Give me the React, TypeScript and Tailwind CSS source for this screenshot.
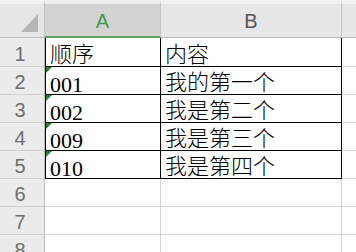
const ROWS: { a: string; b: string }[] = [
  { a: "顺序", b: "内容" },
  { a: "001", b: "我的第一个" },
  { a: "002", b: "我是第二个" },
  { a: "009", b: "我是第三个" },
  { a: "010", b: "我是第四个" },
];

const cellFont = { fontFamily: '"Liberation Serif", "Noto Sans CJK SC", serif' };
const headFont = { fontFamily: '"Liberation Sans", Arial, sans-serif' };

function RowHead({ n }: { n: number }) {
  return (
    <div
      className="flex items-center justify-center border-r border-b border-r-[#bfbfbf] border-b-[#d0d0d0] bg-[#ebebeb] pt-[3px] pr-[4px] text-[20px] text-[#6e6e6e]"
      style={headFont}
    >
      {n}
    </div>
  );
}

// CJK glyphs hang lower than digits, so they get a bit more room below
const isCjk = (s: string) => /[^\x00-\x7f]/.test(s);

export default function App() {
  const empty = [6, 7, 8, 9];
  return (
    <div className="h-[252px] w-[356px] overflow-hidden bg-white">
      <div className="grid grid-cols-[45px_116px_181px_1fr] grid-rows-[38px_29px_repeat(7,28px)]">
        {/* header */}
        <div className="flex items-end justify-end border-r border-b border-r-[#bfbfbf] border-b-[#bfbfbf] border-t-4 border-t-[#f2f2f2] bg-[#e6e6e6] pr-[6px] pb-[5px]">
          <svg width="17" height="18" viewBox="0 0 17 18">
            <polygon points="17,0 17,18 0,18" fill="#b6b6b6" />
          </svg>
        </div>
        <div
          className="flex items-center justify-center border-r border-b-2 border-r-[#c6c6c6] border-b-[#5fa35f] border-t-4 border-t-[#eeeeee] bg-[#d3d3d3] pt-[1px] text-[20px] text-[#3f9a50]"
          style={headFont}
        >
          A
        </div>
        <div
          className="flex items-center justify-center border-r border-b border-r-[#c6c6c6] border-b-[#bcbcbc] border-t-4 border-t-[#f2f2f2] bg-[#e6e6e6] pt-[1px] text-[20px] text-[#555]"
          style={headFont}
        >
          B
        </div>
        <div className="border-b border-b-[#bcbcbc] border-t-4 border-t-[#f2f2f2] bg-[#e6e6e6]" />

        {ROWS.map((r, i) => (
          <div key={i} className="contents">
            <RowHead n={i + 1} />
            <div
              className={`relative flex items-end border-r border-b border-l border-black pl-[4px] text-[22px] font-light leading-[16px] text-black ${
                isCjk(r.a) ? "pb-[3px]" : "pb-[1px]"
              }`}
              style={cellFont}
            >
              {i > 0 && (
                <svg className="absolute left-0 top-0" width="6" height="6" viewBox="0 0 6 6">
                  <polygon points="0,0 6,0 0,6" fill="#2a7d43" />
                </svg>
              )}
              {r.a}
            </div>
            <div
              className="flex items-end border-r border-b border-black pb-[3px] pl-[4px] text-[22px] font-light leading-[16px] whitespace-nowrap text-black"
              style={cellFont}
            >
              {r.b}
            </div>
            <div className="border-b border-b-[#d4d4d4]" />
          </div>
        ))}

        {empty.map((n) => (
          <div key={n} className="contents">
            <RowHead n={n} />
            <div className="border-r border-b border-[#d4d4d4]" />
            <div className="border-r border-b border-[#d4d4d4]" />
            <div className="border-b border-[#d4d4d4]" />
          </div>
        ))}
      </div>
    </div>
  );
}
